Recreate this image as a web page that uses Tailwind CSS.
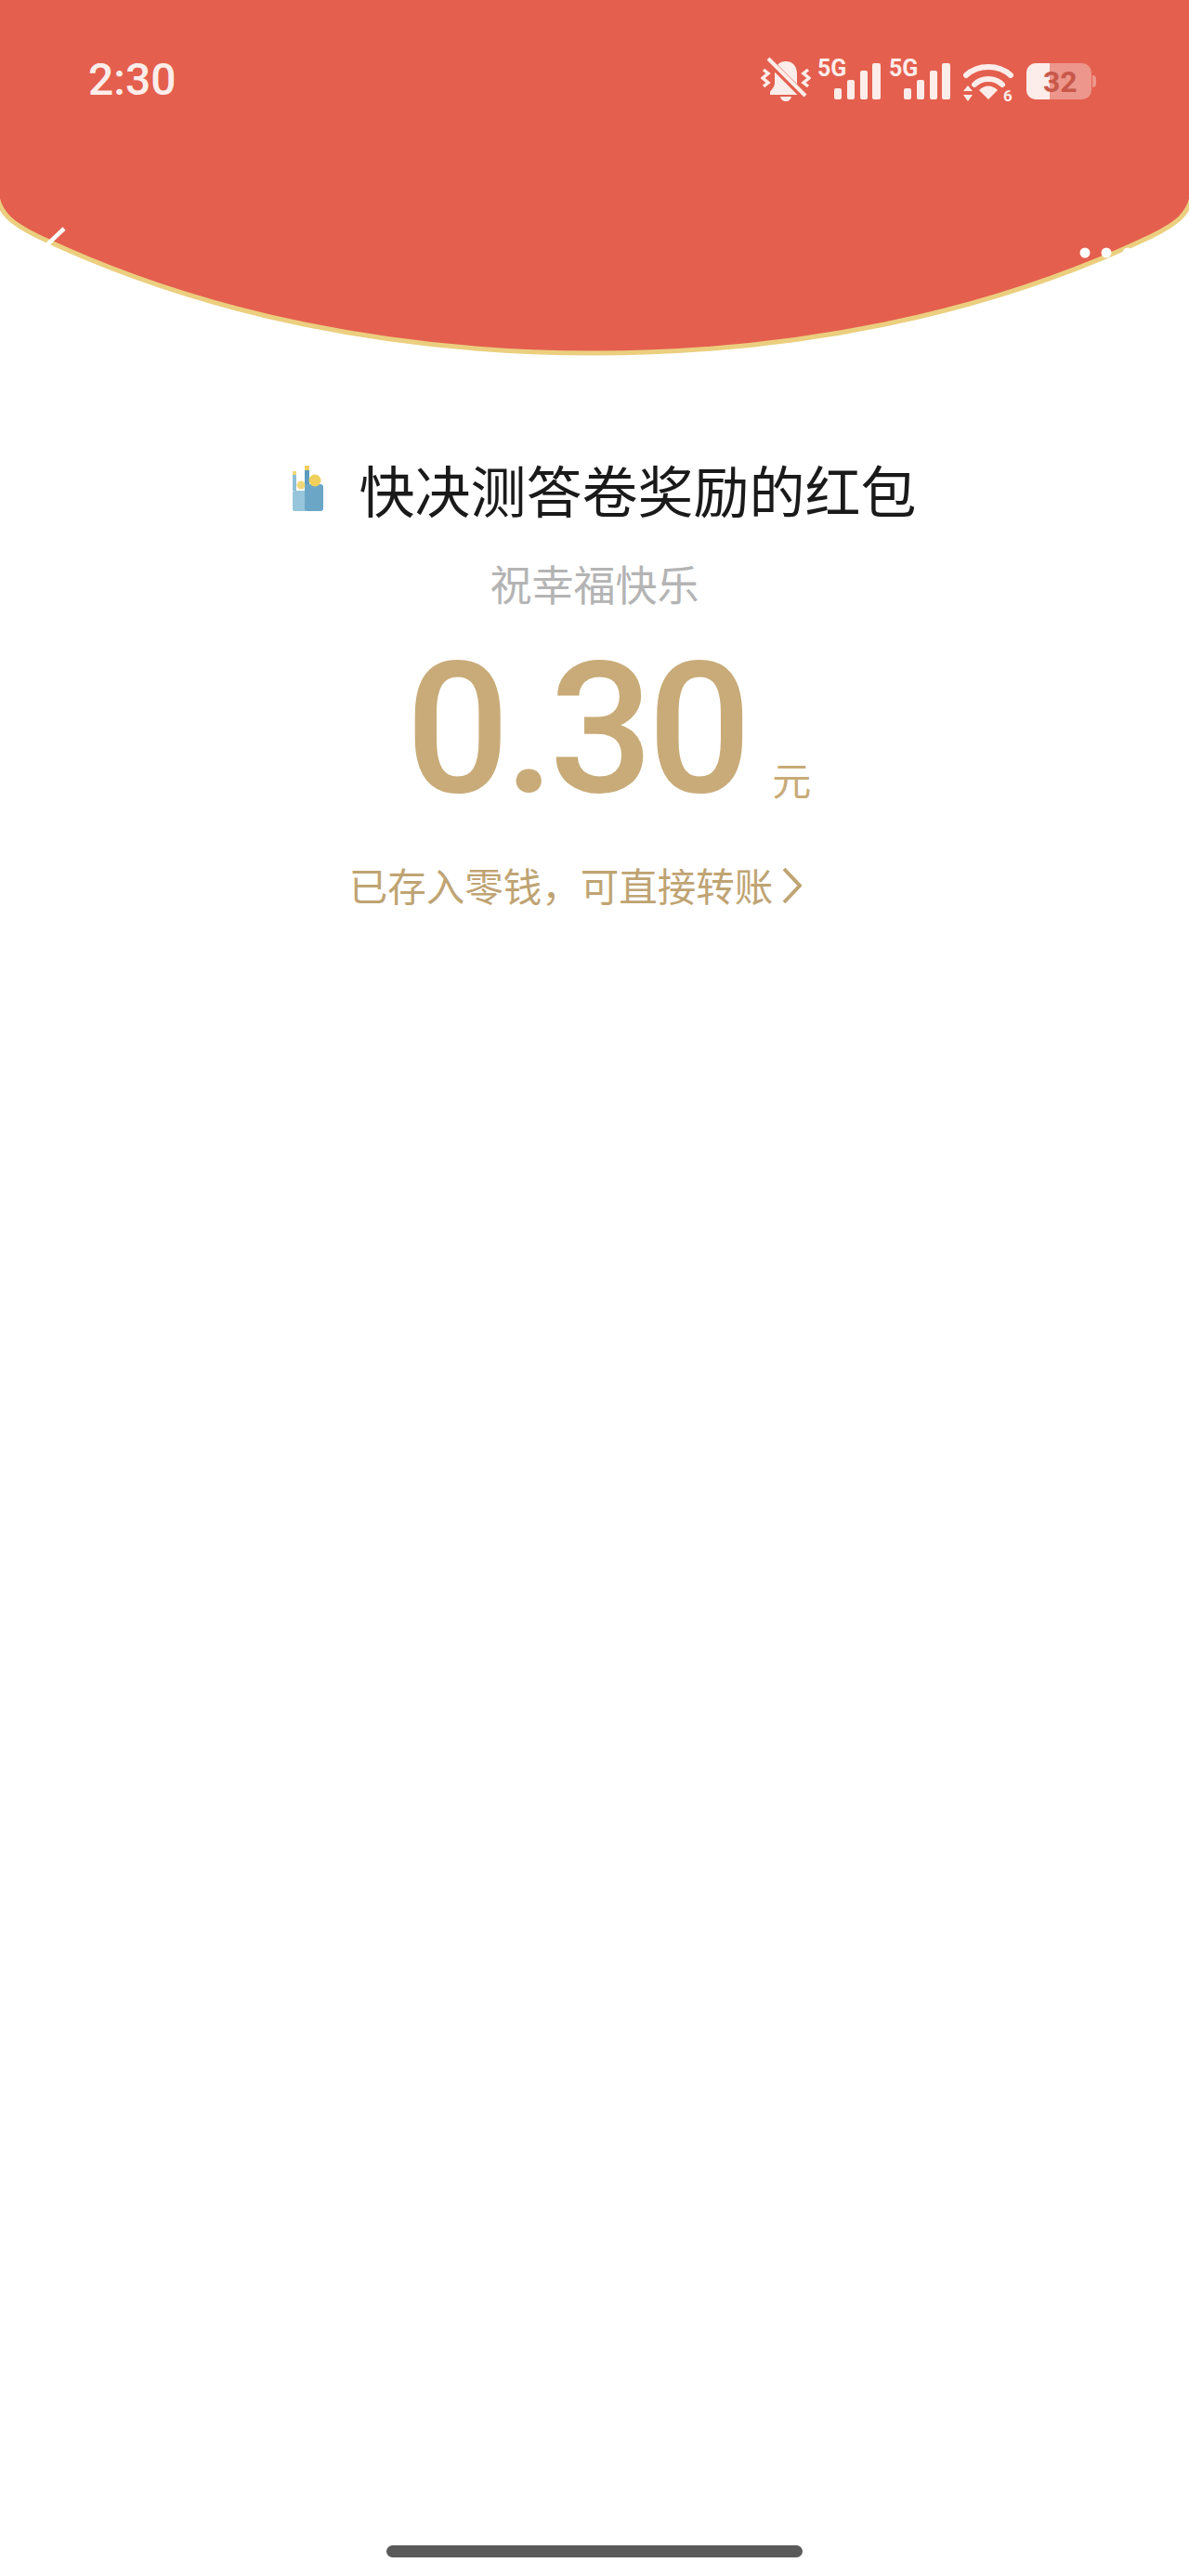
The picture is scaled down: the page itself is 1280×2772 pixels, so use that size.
<!DOCTYPE html>
<html lang="zh-CN">
<head>
  <meta charset="UTF-8">
  <title>红包详情</title>
  <meta name="viewport" content="width=device-width, initial-scale=1">
  <script src="https://cdn.jsdelivr.net/npm/@tailwindcss/browser@4"></script>
</head>
<body class="bg-white [font-family:'Noto_Sans_CJK_SC',sans-serif]">
<div class="relative w-[1280px] h-[2772px] overflow-hidden flex flex-col bg-white">

  <!-- red curved header, back arrow and menu dots -->
  <svg class="absolute top-0 left-0" width="1280" height="400" viewBox="0 0 1280 400" fill="none">
    <path d="M-4 -4H1284V205C1282 232 1262 243 1240 254C1060 340 850 380 640 380C430 380 220 340 40 254C18 243 -2 232 -4 205Z" fill="#E45F4E" stroke="#EBCF7F" stroke-width="5"/>
    <path d="M69 246L50 264" stroke="#fff" stroke-width="4.5"/>
    <circle cx="1168" cy="272" r="5.5" fill="#fff"/>
    <circle cx="1191" cy="272" r="5.5" fill="#fff"/>
    <circle cx="1214" cy="272" r="5.5" fill="#fff"/>
  </svg>

  <!-- status bar -->
  <div class="relative h-[172px] flex justify-between items-center pl-[95px] pr-[100px] text-[#FCEDEA]">
    <span class="font-['Roboto'] font-medium text-[48px] leading-none">2:30</span>
    <div class="flex items-start h-[50px]">
      <!-- muted bell -->
      <svg width="54" height="50" viewBox="0 0 54 50" class="mr-[7px]" fill="currentColor">
        <path d="M27 5C19 5 15 11 15 19V28C15 32 12 35 10 38V41H44V38C42 35 39 32 39 28V19C39 11 35 5 27 5Z"/>
        <path d="M21 43H33C32 47 29.500 48 27 48C24.500 48 22 47 21 43Z"/>
        <path d="M8 4L48 44" stroke="#E45F4E" stroke-width="8"/>
        <path d="M8 2L48 42" stroke="currentColor" stroke-width="4"/>
        <path d="M3 14L8 18L2 23L8 28L3 32M51 14L46 18L52 23L46 28L51 32" fill="none" stroke="currentColor" stroke-width="3.500"/>
      </svg>
      <!-- 5G signal 1 -->
      <svg width="68" height="50" viewBox="0 0 68 50" class="mr-[9px]" fill="currentColor">
        <text x="0" y="21" font-family="Roboto" font-weight="700" font-size="25">5G</text>
        <rect x="18" y="34" width="8" height="12" rx="2"/>
        <rect x="32" y="25" width="8" height="21" rx="2"/>
        <rect x="46" y="15" width="8" height="31" rx="2"/>
        <rect x="59" y="7" width="9" height="39" rx="2"/>
      </svg>
      <!-- 5G signal 2 -->
      <svg width="68" height="50" viewBox="0 0 68 50" class="mr-[12px]" fill="currentColor">
        <text x="0" y="21" font-family="Roboto" font-weight="700" font-size="25">5G</text>
        <rect x="16" y="34" width="8" height="12" rx="2"/>
        <rect x="30" y="25" width="8" height="21" rx="2"/>
        <rect x="44" y="15" width="8" height="31" rx="2"/>
        <rect x="57" y="7" width="9" height="39" rx="2"/>
      </svg>
      <!-- wifi -->
      <svg width="56" height="50" viewBox="0 0 56 50" class="mr-[12px]" fill="none" stroke="currentColor">
        <path d="M3 20C16 8 38 8 51 20" stroke-width="6" stroke-linecap="round"/>
        <path d="M12 30C20 22 34 22 42 30" stroke-width="6" stroke-linecap="round"/>
        <path d="M17 36C23 30 31 30 37 36L27 46Z" fill="currentColor" stroke="none"/>
        <path d="M5 31L10 37H0ZM5 48L10 41H0Z" fill="currentColor" stroke="none"/>
        <text x="43" y="48" font-family="Roboto" font-weight="700" font-size="17" fill="currentColor" stroke="none">6</text>
      </svg>
      <!-- battery -->
      <div class="relative mt-[7px] w-[75px] h-[39px] flex items-center">
        <div class="absolute left-0 top-0 w-[70px] h-[39px] rounded-[10px] bg-white/35 overflow-hidden">
          <div class="w-[25px] h-full bg-[#FCEDEA]"></div>
        </div>
        <div class="absolute right-0 top-[13px] w-[4px] h-[13px] rounded-r-sm bg-white/35"></div>
        <span class="relative ml-[18px] font-['Roboto'] font-bold text-[32px] leading-none text-[#C8584A]">32</span>
      </div>
    </div>
  </div>

  <!-- title -->
  <div class="relative mt-[314px] h-[80px] flex justify-center items-center pl-[20px]">
    <svg width="36" height="50" viewBox="0 0 36 50" class="mr-[37px] mt-[0px]">
      <rect x="1" y="7" width="4" height="20" fill="#8FBFD6"/>
      <rect x="1" y="27" width="16" height="22" rx="2" fill="#97C6DC"/>
      <rect x="14" y="4" width="5" height="24" fill="#5C9CBF"/>
      <rect x="14" y="20" width="20" height="29" rx="3" fill="#6BA6C6"/>
      <rect x="14" y="0" width="5" height="5" fill="#F0D060"/>
      <rect x="1" y="6" width="4" height="4" fill="#F0D878"/>
      <circle cx="25" cy="16" r="6.500" fill="#EFD05C"/>
      <circle cx="10" cy="21" r="4.500" fill="#F0D878"/>
    </svg>
    <h1 class="text-[60px] leading-none font-normal text-[#1A1A1A] whitespace-nowrap">快决测答卷奖励的红包</h1>
  </div>

  <!-- wish -->
  <p class="relative mt-[31px] h-[60px] flex justify-center items-center text-[45px] leading-none text-[#B4B4B4]">祝幸福快乐</p>

  <!-- amount -->
  <div class="relative mt-[28px] h-[200px] flex justify-center items-end pl-[30px] text-[#C8AB78]">
    <span class="font-['Roboto'] font-medium text-[197px] leading-[200px] tracking-[-6px]">0.30</span>
    <span class="ml-[28px] mb-[26px] text-[42px] leading-none">元</span>
  </div>

  <!-- balance link -->
  <div class="relative mt-[38px] h-[60px] flex justify-center items-center pr-[41px] text-[#BFA473]">
    <span class="text-[41.500px] leading-none whitespace-nowrap">已存入零钱，可直接转账</span>
    <svg width="21" height="40" viewBox="0 0 21 40" fill="none" class="ml-[10px]" stroke="currentColor" stroke-width="4">
      <path d="M2 2L19 20L2 38"/>
    </svg>
  </div>

  <!-- home indicator -->
  <div class="mt-auto pb-[20px] flex justify-center">
    <div class="w-[448px] h-[13px] rounded-full bg-[#5A5A5A]"></div>
  </div>
</div>
</body>
</html>
